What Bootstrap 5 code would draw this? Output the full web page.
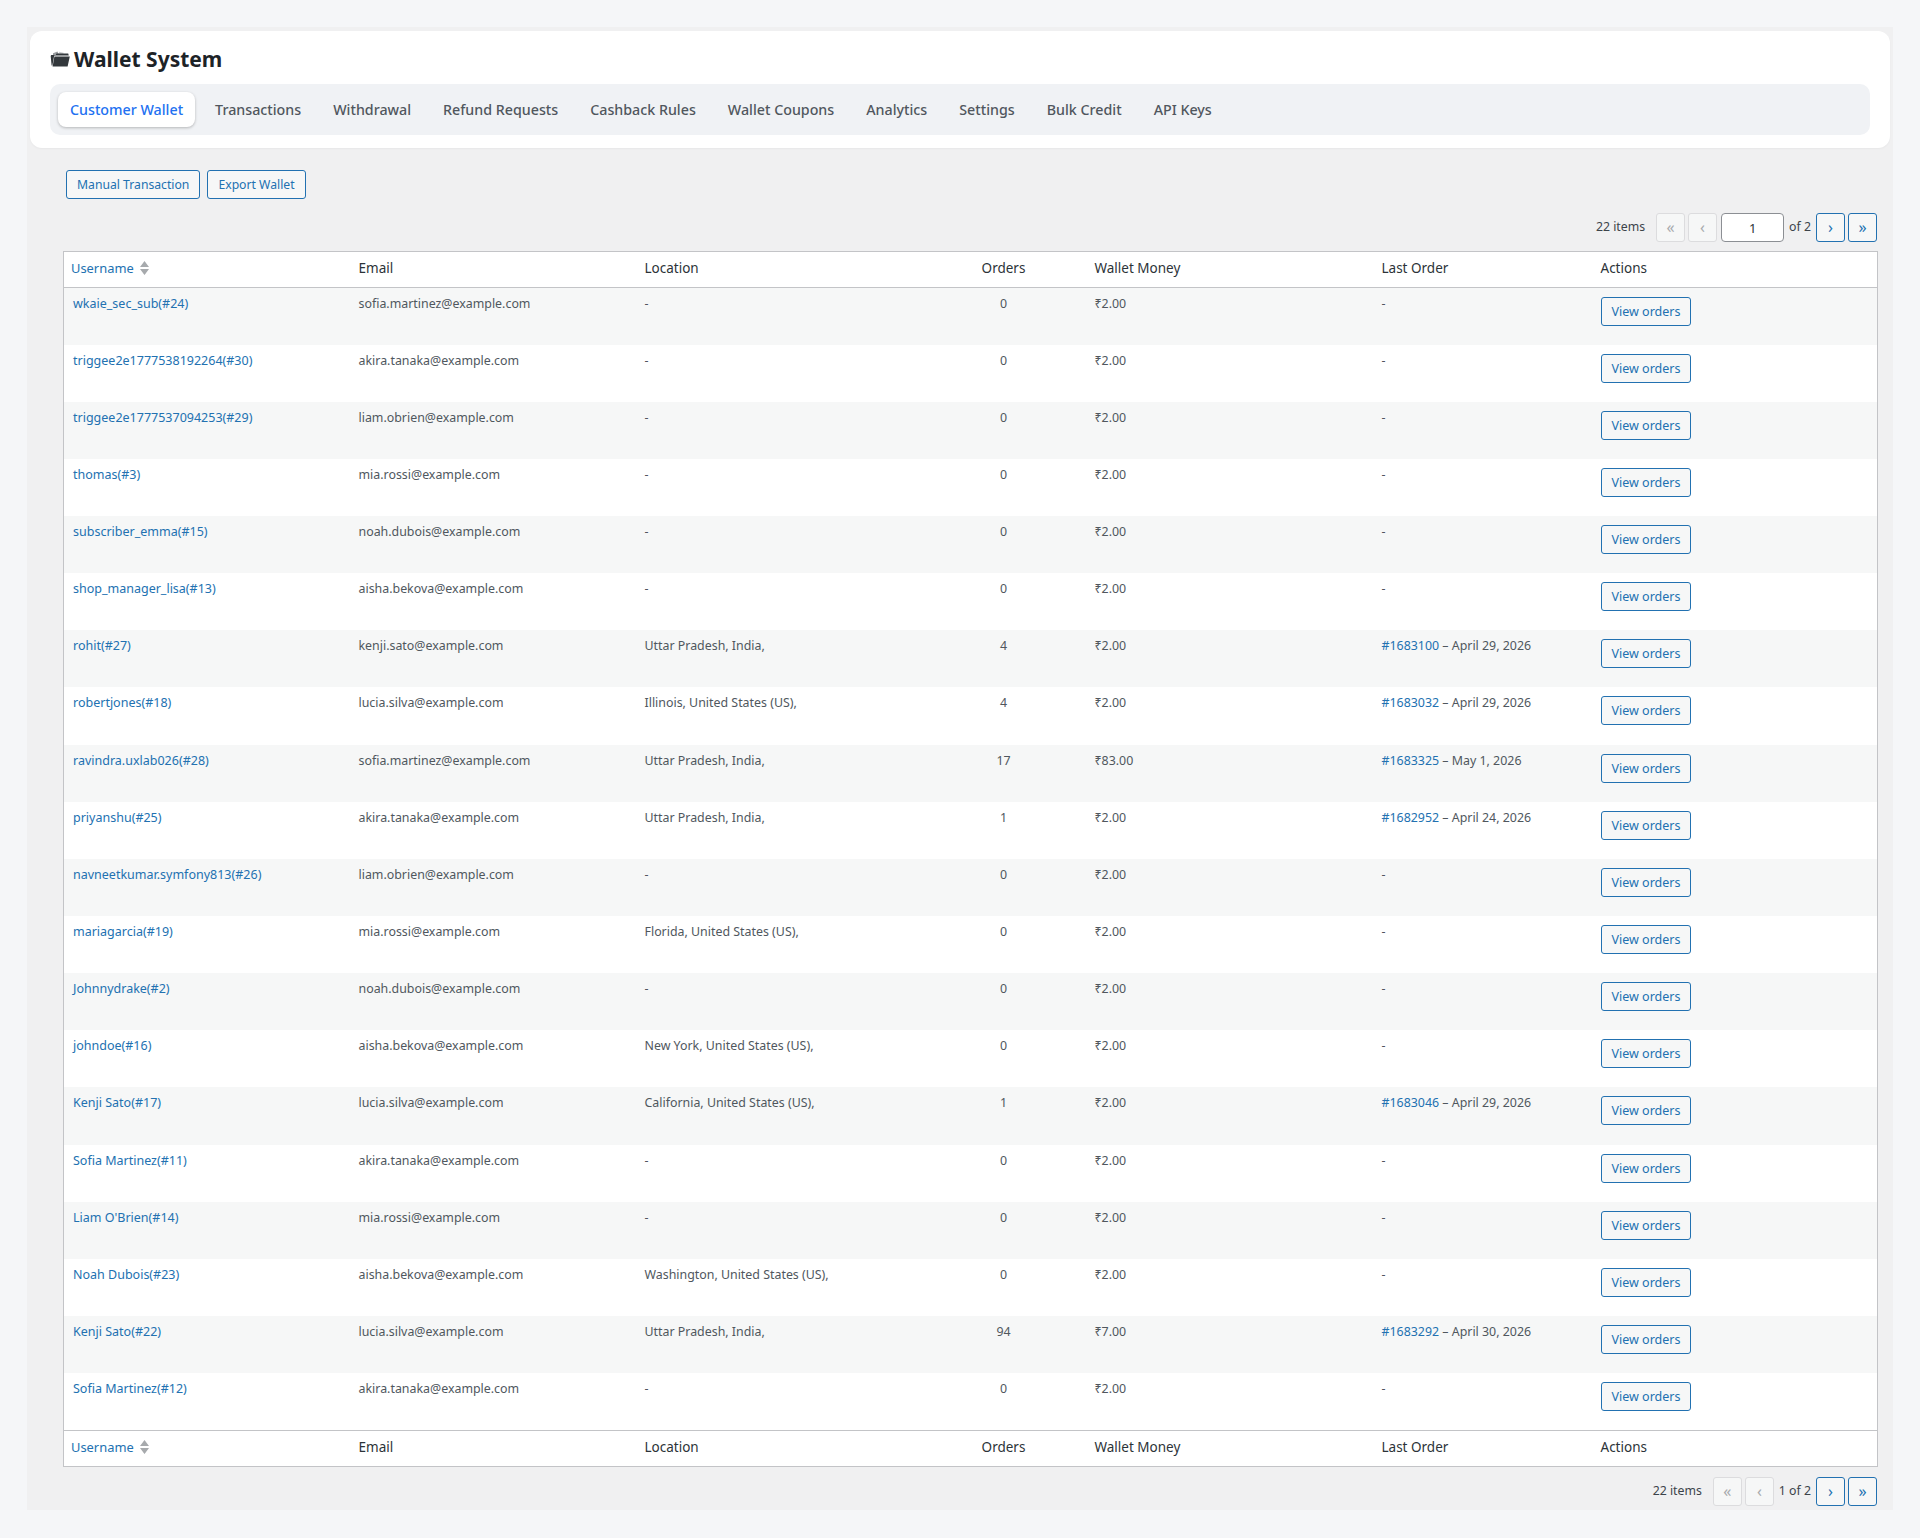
<!DOCTYPE html>
<html lang="en">
<head>
    <meta charset="UTF-8">
    <meta name="viewport" content="width=device-width, initial-scale=1.0">
    <title>Wallet System</title>
    <link href="https://cdn.jsdelivr.net/npm/bootstrap@5.3.0/dist/css/bootstrap.min.css" rel="stylesheet">
    <style>
        body {
            background: #f5f6f8;
            font-family: "Noto Sans", "Open Sans", sans-serif;
            font-size: 13px;
            color: #2c3338;
            padding: 27px 27px 28px;
        }

        .wallet-panel {
            background: #f0f0f1;
            min-height: 1483px;
            padding: 4px 3px 3px;
        }

        .wallet-head {
            background: #fff;
            border-radius: 12px;
            padding: 13px 20px 13px;
            height: 117px;
            box-shadow: 0 1px 2px rgba(0, 0, 0, .04);
        }

        .wallet-title {
            font-size: 21px;
            font-weight: 700;
            line-height: 30px;
            color: #1d2327;
            margin: 0 0 10px;
        }

        .tab-bar {
            background: #f0f2f5;
            border-radius: 10px;
            padding: 8px;
            height: 51px;
            gap: 8px;
        }

        .tab-bar .nav-link {
            font-size: 14.25px;
            font-weight: 500;
            color: #50575e;
            padding: 0 12px;
            line-height: 35px;
            border-radius: 8px;
        }

        .tab-bar .nav-link.active {
            background: #fff;
            color: #2271f1;
            box-shadow: 0 1px 3px rgba(0, 0, 0, .25);
        }

        .wallet-body {
            padding: 22px 13px 0 33px;
        }

        .wallet-actions {
            margin-left: 3px;
            gap: 7px;
        }

        .wp-btn {
            font-size: 12.5px;
            line-height: 27px;
            padding: 0 10px;
            color: #2271b1;
            background: #f6f7f7;
            border: 1px solid #2271b1;
            border-radius: 3px;
        }

        .wallet-actions .wp-btn {
            font-size: 12.2px;
        }

        .wp-btn:hover {
            color: #135e96;
            background: #f0f0f1;
            border-color: #135e96;
        }

        .pager-row {
            font-size: 12.3px;
            color: #3c434a;
            gap: 3px;
        }

        .pager-btn {
            width: 29px;
            height: 29px;
            padding: 0;
            line-height: 25px;
            font-size: 16px;
            text-align: center;
            color: #2271b1;
            background: #f6f7f7;
            border: 1px solid #2271b1;
            border-radius: 3px;
        }

        .pager-btn:disabled {
            color: #a7aaad;
            border-color: #dcdcde;
            background: #f6f7f7;
            opacity: 1;
        }

        .pager-input {
            width: 63px;
            height: 29px;
            margin-left: 1px;
            text-align: center;
            font-size: 13px;
            color: #2c3338;
            background: #fff;
            border: 1px solid #8c8f94;
            border-radius: 4px;
        }

        .pager-count {
            margin-right: 8px;
        }

        .pager-of {
            margin: 0 2px;
        }

        .pager-top {
            margin: 14px 0 9px;
        }

        .pager-bottom {
            margin-top: 10px;
        }

        .wallet-table {
            table-layout: fixed;
            width: 1814px;
            margin: 0;
            border: 1px solid #c3c4c7;
            background: #fff;
            --bs-table-bg: transparent;
            --bs-table-striped-bg: #f6f7f7;
            --bs-table-striped-color: #50575e;
            --bs-table-color: #50575e;
        }

        .wallet-table th {
            font-weight: 400;
            font-size: 13.5px;
            color: #2c3338;
            padding: 7px 9px 9px;
            height: 36px;
            line-height: 19px;
            border-bottom: 1px solid #c3c4c7;
        }

        .wallet-table tfoot th {
            border-top: 1px solid #c3c4c7;
            border-bottom: 0;
        }

        .wallet-table td {
            font-size: 12.4px;
            line-height: 19px;
            padding: 6px 9px 0;
            height: 57.15px;
            border: 0;
            vertical-align: top;
        }

        .wallet-table th:nth-child(1) { width: 286px; padding-left: 7px; }
        .wallet-table th:nth-child(2) { width: 286px; }
        .wallet-table th:nth-child(3) { width: 286px; }
        .wallet-table th:nth-child(4) { width: 164px; }
        .wallet-table th:nth-child(5) { width: 287px; }
        .wallet-table th:nth-child(6) { width: 219px; }
        .wallet-table th:nth-child(7) { width: 286px; }

        .wallet-table a {
            color: #2271b1;
            text-decoration: none;
        }

        .wallet-table td:first-child {
            font-size: 12.5px;
        }

        .wallet-table th:first-child a {
            font-size: 12.9px;
        }

        .wallet-table .wp-btn {
            margin-top: 3px;
            display: inline-block;
        }

        .sort-arrows {
            display: inline-block;
            vertical-align: -2px;
            margin-left: 6px;
        }
    </style>
</head>
<body>
    <div class="wallet-panel">
        <!-- Header card -->
        <div class="wallet-head">
            <h1 class="wallet-title d-flex align-items-center gap-1">
                <svg width="20" height="16" viewBox="0 0 20 16" aria-hidden="true">
                    <path fill="#9a9da0" d="M3 2.2 7.5 .6l1.2 2.4H6.2L5 4.4H3z"/>
                    <path fill="#c9cbcd" d="M9 .8l4.6 1-.3 1.4H9.4z"/>
                    <path fill="#33383c" d="M1.2 4h4.2l1.2-1.4h11.6l.6 2H4.2L2.4 14.6H1.6L.7 5z"/>
                    <path fill="#33383c" d="M4.4 5.6H19.8L17.6 15.4H2.6z"/>
                </svg>
                <span>Wallet System</span>
            </h1>
            <ul class="nav tab-bar">
                <li class="nav-item"><a class="nav-link active" href="#">Customer Wallet</a></li>
                <li class="nav-item"><a class="nav-link" href="#">Transactions</a></li>
                <li class="nav-item"><a class="nav-link" href="#">Withdrawal</a></li>
                <li class="nav-item"><a class="nav-link" href="#">Refund Requests</a></li>
                <li class="nav-item"><a class="nav-link" href="#">Cashback Rules</a></li>
                <li class="nav-item"><a class="nav-link" href="#">Wallet Coupons</a></li>
                <li class="nav-item"><a class="nav-link" href="#">Analytics</a></li>
                <li class="nav-item"><a class="nav-link" href="#">Settings</a></li>
                <li class="nav-item"><a class="nav-link" href="#">Bulk Credit</a></li>
                <li class="nav-item"><a class="nav-link" href="#">API Keys</a></li>
            </ul>
        </div>

        <div class="wallet-body">
            <div class="wallet-actions d-flex">
                <button class="btn wp-btn">Manual Transaction</button>
                <button class="btn wp-btn">Export Wallet</button>
            </div>

            <!-- Top pager -->
            <div class="pager-row pager-top d-flex justify-content-end align-items-center">
                <span class="pager-count">22 items</span>
                <button class="btn pager-btn" disabled>«</button>
                <button class="btn pager-btn" disabled>‹</button>
                <input class="pager-input" type="text" value="1">
                <span class="pager-of">of 2</span>
                <button class="btn pager-btn">›</button>
                <button class="btn pager-btn">»</button>
            </div>

            <table class="table table-striped wallet-table">
                <thead>
                    <tr id="headRow"></tr>
                </thead>
                <tbody id="walletRows"></tbody>
                <tfoot>
                    <tr id="footRow"></tr>
                </tfoot>
            </table>

            <!-- Bottom pager -->
            <div class="pager-row pager-bottom d-flex justify-content-end align-items-center">
                <span class="pager-count">22 items</span>
                <button class="btn pager-btn" disabled>«</button>
                <button class="btn pager-btn" disabled>‹</button>
                <span class="pager-of">1 of 2</span>
                <button class="btn pager-btn">›</button>
                <button class="btn pager-btn">»</button>
            </div>
        </div>
    </div>

    <script src="https://cdn.jsdelivr.net/npm/bootstrap@5.3.0/dist/js/bootstrap.bundle.min.js"></script>
    <script>
        const headCells = `
            <th><a href="#">Username</a><svg class="sort-arrows" width="9" height="14" viewBox="0 0 9 14"><path fill="#a7aaad" d="M4.5 0 9 6H0zM0 8h9l-4.5 6z"/></svg></th>
            <th>Email</th>
            <th>Location</th>
            <th class="text-center">Orders</th>
            <th>Wallet Money</th>
            <th>Last Order</th>
            <th>Actions</th>`;
        document.getElementById('headRow').innerHTML = headCells;
        document.getElementById('footRow').innerHTML = headCells;

        const customers = [
            ['wkaie_sec_sub(#24)', 'sofia.martinez@example.com', '-', '0', '2.00', ''],
            ['triggee2e1777538192264(#30)', 'akira.tanaka@example.com', '-', '0', '2.00', ''],
            ['triggee2e1777537094253(#29)', 'liam.obrien@example.com', '-', '0', '2.00', ''],
            ['thomas(#3)', 'mia.rossi@example.com', '-', '0', '2.00', ''],
            ['subscriber_emma(#15)', 'noah.dubois@example.com', '-', '0', '2.00', ''],
            ['shop_manager_lisa(#13)', 'aisha.bekova@example.com', '-', '0', '2.00', ''],
            ['rohit(#27)', 'kenji.sato@example.com', 'Uttar Pradesh, India,', '4', '2.00', '#1683100|April 29, 2026'],
            ['robertjones(#18)', 'lucia.silva@example.com', 'Illinois, United States (US),', '4', '2.00', '#1683032|April 29, 2026'],
            ['ravindra.uxlab026(#28)', 'sofia.martinez@example.com', 'Uttar Pradesh, India,', '17', '83.00', '#1683325|May 1, 2026'],
            ['priyanshu(#25)', 'akira.tanaka@example.com', 'Uttar Pradesh, India,', '1', '2.00', '#1682952|April 24, 2026'],
            ['navneetkumar.symfony813(#26)', 'liam.obrien@example.com', '-', '0', '2.00', ''],
            ['mariagarcia(#19)', 'mia.rossi@example.com', 'Florida, United States (US),', '0', '2.00', ''],
            ['Johnnydrake(#2)', 'noah.dubois@example.com', '-', '0', '2.00', ''],
            ['johndoe(#16)', 'aisha.bekova@example.com', 'New York, United States (US),', '0', '2.00', ''],
            ['Kenji Sato(#17)', 'lucia.silva@example.com', 'California, United States (US),', '1', '2.00', '#1683046|April 29, 2026'],
            ['Sofia Martinez(#11)', 'akira.tanaka@example.com', '-', '0', '2.00', ''],
            ["Liam O'Brien(#14)", 'mia.rossi@example.com', '-', '0', '2.00', ''],
            ['Noah Dubois(#23)', 'aisha.bekova@example.com', 'Washington, United States (US),', '0', '2.00', ''],
            ['Kenji Sato(#22)', 'lucia.silva@example.com', 'Uttar Pradesh, India,', '94', '7.00', '#1683292|April 30, 2026'],
            ['Sofia Martinez(#12)', 'akira.tanaka@example.com', '-', '0', '2.00', '']
        ];

        document.getElementById('walletRows').innerHTML = customers.map(c => {
            let lastOrder = '-';
            if (c[5]) {
                const parts = c[5].split('|');
                lastOrder = `<a href="#">${parts[0]}</a> – ${parts[1]}`;
            }
            return `<tr>
                <td><a href="#">${c[0]}</a></td>
                <td>${c[1]}</td>
                <td>${c[2]}</td>
                <td class="text-center">${c[3]}</td>
                <td>₹${c[4]}</td>
                <td>${lastOrder}</td>
                <td><a class="btn wp-btn" href="#">View orders</a></td>
            </tr>`;
        }).join('');
    </script>
</body>
</html>
